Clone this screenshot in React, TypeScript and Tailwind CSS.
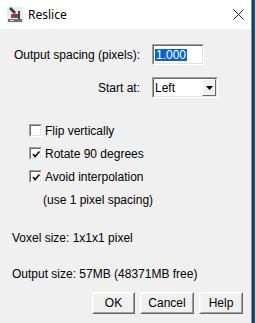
import React from "react";

function Sunken({ className = "", children }: { className?: string; children?: React.ReactNode }) {
  return (
    <div className={`border border-t-[#a0a0a0] border-l-[#a0a0a0] border-r-white border-b-white ${className}`}>
      <div className="w-full h-full border border-t-[#696969] border-l-[#696969] border-r-[#e3e3e3] border-b-[#e3e3e3] bg-white">
        {children}
      </div>
    </div>
  );
}

function Check({ checked, label }: { checked: boolean; label: string }) {
  return (
    <div className="h-[23px] flex items-center pl-[29px]">
      <Sunken className="w-[13px] h-[13px]">
        {checked && (
          <svg width="9" height="9" viewBox="0 0 9 9" className="block ml-[1px] mt-[1px]">
            <polyline points="1,4 3,6.5 7.5,1.5" fill="none" stroke="#1a1a1a" strokeWidth="1.8" />
          </svg>
        )}
      </Sunken>
      <span className="ml-[3px]">{label}</span>
    </div>
  );
}

function Btn({ label, w }: { label: string; w: string }) {
  return (
    <div className={`${w} h-[22px] border border-t-white border-l-white border-r-[#696969] border-b-[#696969]`}>
      <div className="w-full h-full border border-t-[#f6f6f6] border-l-[#f6f6f6] border-r-[#a0a0a0] border-b-[#a0a0a0] bg-[#f0f0f0] flex items-center justify-center">
        {label}
      </div>
    </div>
  );
}

function Icon() {
  return (
    <svg width="16" height="16" viewBox="0 0 16 16" className="block">
      <rect x="0" y="0" width="16" height="16" fill="#e8ecef" />
      <path d="M2 2 L7 7 L9 5 L4 0 Z" fill="#3a3f45" />
      <rect x="4" y="7" width="9" height="4" fill="#5a6068" />
      <circle cx="8.5" cy="8.5" r="2" fill="#d01c2a" />
      <rect x="11" y="4" width="2" height="8" fill="#404850" />
      <rect x="1" y="12" width="14" height="3" fill="#6b7178" />
      <rect x="3" y="13" width="4" height="1" fill="#d8dde2" />
    </svg>
  );
}

export default function App() {
  return (
    <div
      className="w-[255px] h-[323px] flex text-[12px] text-black overflow-hidden"
      style={{ fontFamily: '"Liberation Sans", Arial, sans-serif' }}
    >
      <div className="flex-1 flex flex-col bg-[#f0f0f0]">
        <div className="h-[29px] bg-white flex items-center pl-[7px] pr-[7px]">
          <Icon />
          <span
            className="ml-[5px] text-[12px] text-black"
            style={{ fontFamily: '"Noto Sans", "Open Sans", sans-serif' }}
          >
            Reslice
          </span>
          <div className="flex-1" />
          <svg width="11" height="11" viewBox="0 0 11 11" className="block">
            <path d="M0.5 0.5 L10.5 10.5 M10.5 0.5 L0.5 10.5" stroke="#222" strokeWidth="1" />
          </svg>
        </div>

        <div className="pt-[15px] pl-[12px] grid grid-cols-[128px_max-content] gap-x-[12px] gap-y-[12px] items-center">
          <div className="text-right">Output spacing (pixels):</div>
          <Sunken className="w-[52px] h-[21px]">
            <div className="h-full flex items-center pl-[1px]">
              <span className="bg-[#0a64c8] text-white px-[1px] leading-[12px] h-[12px]">1.000</span>
            </div>
          </Sunken>
          <div className="text-right">Start at:</div>
          <Sunken className="w-[66px] h-[21px]">
            <div className="h-full flex items-center">
              <span className="flex-1 pl-[1px]">Left</span>
              <div className="w-[14px] h-full border border-t-white border-l-white border-r-[#696969] border-b-[#696969] bg-[#f0f0f0] flex items-center justify-center">
                <svg width="7" height="4" viewBox="0 0 7 4" className="block">
                  <path d="M0 0 L7 0 L3.5 4 Z" fill="#000" />
                </svg>
              </div>
            </div>
          </Sunken>
        </div>

        <div className="mt-[21px] flex flex-col">
          <Check checked={false} label="Flip vertically" />
          <Check checked={true} label="Rotate 90 degrees" />
          <Check checked={true} label="Avoid interpolation" />
          <div className="h-[23px] flex items-center pl-[43px]">(use 1 pixel spacing)</div>
        </div>

        <div className="mt-[19px] pl-[12px] h-[16px] flex items-center">Voxel size: 1x1x1 pixel</div>
        <div className="mt-[20px] pl-[12px] h-[16px] flex items-center">Output size: 57MB (48371MB free)</div>

        <div className="mt-[10px] flex justify-end gap-[5px] pr-[8px]">
          <Btn label="OK" w="w-[43px]" />
          <Btn label="Cancel" w="w-[54px]" />
          <Btn label="Help" w="w-[44px]" />
        </div>
      </div>
      <div className="w-[1px] h-full bg-[#7d93aa]" />
      <div className="w-[2px] h-full bg-[#1d3a5a]" />
      <div className="w-[1px] h-full bg-[#3b5877]" />
    </div>
  );
}
